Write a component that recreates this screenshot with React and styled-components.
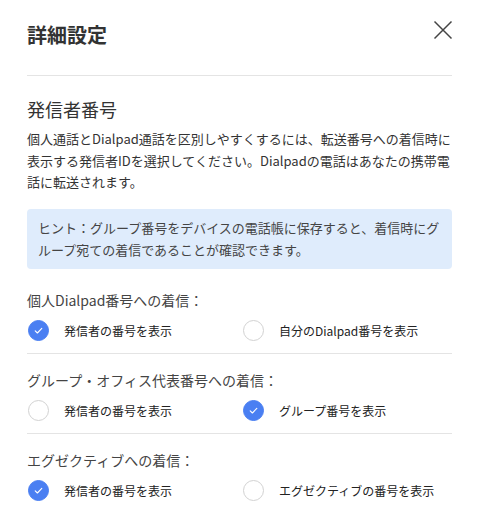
import React, { useState } from 'react';
import styled, { createGlobalStyle } from 'styled-components';

const GlobalStyle = createGlobalStyle`
  body {
    margin: 0;
    background: #fff;
    font-family: "Noto Sans CJK JP", "Noto Sans", sans-serif;
    color: #333;
  }
`;

const Panel = styled.div`
  width: 482px;
  box-sizing: border-box;
  padding: 0 30px 0 27px;
`;

const Header = styled.header`
  display: flex;
  justify-content: space-between;
  align-items: flex-start;
  padding: 22px 0 27px;
  border-bottom: 1px solid #e4e4e4;
`;

const Title = styled.h1`
  margin: 0;
  font-size: 20px;
  line-height: 26px;
  font-weight: 700;
  color: #333;
`;

const CloseButton = styled.button`
  border: 0;
  background: none;
  padding: 0;
  margin: -3px -2px 0 0;
  width: 22px;
  height: 22px;
  cursor: pointer;
  color: #444;
`;

const SectionTitle = styled.h2`
  margin: 20px 0 6px;
  font-size: 18px;
  line-height: 26px;
  font-weight: 400;
  color: #333;
`;

const Description = styled.p`
  margin: 0;
  font-size: 13px;
  line-height: 21.5px;
  color: #333;
`;

const Hint = styled.div`
  margin-top: 16px;
  padding: 8px 10px 8px 11px;
  background: #dfecfc;
  border-radius: 4px;
  font-size: 13px;
  line-height: 22px;
  color: #444;
`;

const Group = styled.div`
  padding: ${p => (p.first ? '21px' : '16px')} 0 11px;
  border-bottom: ${p => (p.last ? 'none' : '1px solid #e4e4e4')};
`;

const GroupLabel = styled.div`
  font-size: 14px;
  line-height: 20px;
  color: #444;
`;

const Options = styled.div`
  display: grid;
  grid-template-columns: 215px 1fr;
  margin-top: 10px;
`;

const Option = styled.label`
  display: flex;
  align-items: center;
  gap: 15px;
  height: 22px;
  font-size: 12px;
  color: #222;
  cursor: pointer;
`;

const Circle = styled.span`
  box-sizing: border-box;
  width: 21px;
  height: 21px;
  margin-left: 1px;
  border-radius: 50%;
  flex-shrink: 0;
  display: flex;
  align-items: center;
  justify-content: center;
  background: ${p => (p.checked ? '#4a7ff2' : '#fff')};
  border: 1px solid ${p => (p.checked ? '#4a7ff2' : '#d2d2d2')};
`;

const CheckIcon = () => (
  <svg width="11" height="11" viewBox="0 0 11 11" fill="none">
    <path d="M2.2 5.8 L4.4 8 L8.8 3.4" stroke="#fff" strokeWidth="1.1" strokeLinecap="round" strokeLinejoin="round" />
  </svg>
);

const CloseIcon = () => (
  <svg width="22" height="22" viewBox="0 0 22 22" fill="none">
    <path d="M2.5 2.5 L19.5 19.5 M19.5 2.5 L2.5 19.5" stroke="currentColor" strokeWidth="1.5" />
  </svg>
);

const groups = [
  { label: '個人Dialpad番号への着信：', options: ['発信者の番号を表示', '自分のDialpad番号を表示'], value: 0 },
  { label: 'グループ・オフィス代表番号への着信：', options: ['発信者の番号を表示', 'グループ番号を表示'], value: 1 },
  { label: 'エグゼクティブへの着信：', options: ['発信者の番号を表示', 'エグゼクティブの番号を表示'], value: 0 },
];

const App = () => {
  const [values, setValues] = useState(groups.map(g => g.value));

  const handleSelect = (gi, oi) => {
    setValues(prev => prev.map((v, i) => (i === gi ? oi : v)));
  };

  return (
    <>
      <GlobalStyle />
      <Panel>
        <Header>
          <Title>詳細設定</Title>
          <CloseButton aria-label="閉じる">
            <CloseIcon />
          </CloseButton>
        </Header>
        <SectionTitle>発信者番号</SectionTitle>
        <Description>
          個人通話とDialpad通話を区別しやすくするには、転送番号への着信時に表示する発信者IDを選択してください。Dialpadの電話はあなたの携帯電話に転送されます。
        </Description>
        <Hint>
          ヒント：グループ番号をデバイスの電話帳に保存すると、着信時にグループ宛ての着信であることが確認できます。
        </Hint>
        {groups.map((g, gi) => (
          <Group key={g.label} first={gi === 0} last={gi === groups.length - 1}>
            <GroupLabel>{g.label}</GroupLabel>
            <Options>
              {g.options.map((o, oi) => (
                <Option key={o} onClick={() => handleSelect(gi, oi)}>
                  <Circle checked={values[gi] === oi}>{values[gi] === oi && <CheckIcon />}</Circle>
                  {o}
                </Option>
              ))}
            </Options>
          </Group>
        ))}
      </Panel>
    </>
  );
};

export default App;
